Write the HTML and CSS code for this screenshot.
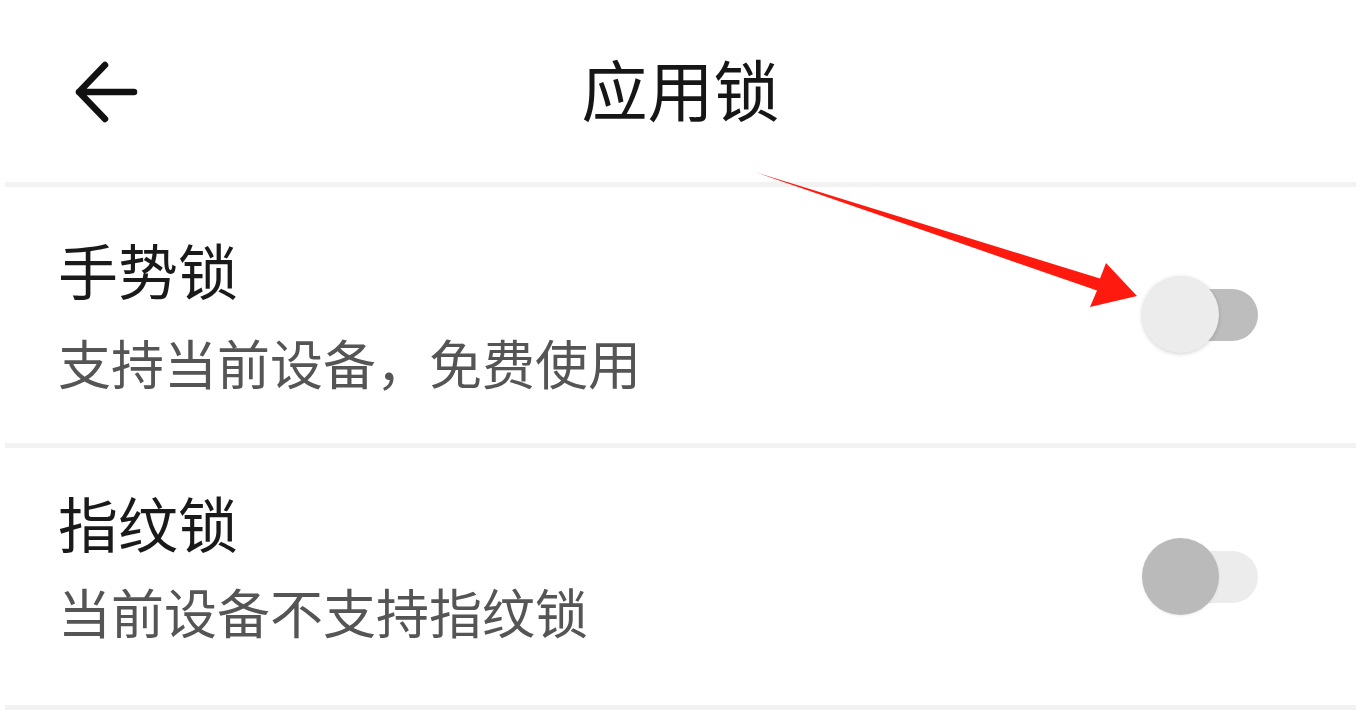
FILE: index.html
```html
<!DOCTYPE html>
<html lang="zh-CN">
<head>
    <meta charset="UTF-8">
    <title>应用锁</title>
    <link rel="stylesheet" href="styles.css">
</head>
<body>
    <div id="page">
        <div class="top-bar">
            <a class="back" href="javascript:;">
                <svg width="64" height="62" viewBox="0 0 64 62">
                    <path d="M31 4 L5 31 L31 58 M5 31 H60" fill="none" stroke="#111" stroke-width="6.5" stroke-linecap="round" stroke-linejoin="round"/>
                </svg>
            </a>
            <h1 class="title">应用锁</h1>
        </div>
        <div class="line"></div>
        <div class="item">
            <div class="item-text">
                <p class="item-name">手势锁</p>
                <p class="item-desc">支持当前设备，免费使用</p>
            </div>
            <div class="switch switch-a">
                <span class="track"></span>
                <span class="knob"></span>
            </div>
        </div>
        <div class="line"></div>
        <div class="item item-b">
            <div class="item-text">
                <p class="item-name">指纹锁</p>
                <p class="item-desc">当前设备不支持指纹锁</p>
            </div>
            <div class="switch switch-b">
                <span class="track"></span>
                <span class="knob"></span>
            </div>
        </div>
        <div class="line"></div>

        <!-- 红色标注箭头 -->
        <svg class="mark" width="1361" height="720" viewBox="0 0 1361 720">
            <polygon points="755,172 1100,278.5 1106,263 1137,296 1090,307 1097,290.5" fill="#ff1a0f"/>
        </svg>
    </div>
</body>
</html>
```

FILE: styles.css
```css
html,
body {
    margin: 0;
    padding: 0;
    background: #fff;
}
#page {
    position: relative;
    width: 1361px;
    height: 720px;
    overflow: hidden;
    font-family: "Noto Sans CJK SC", "Noto Sans", sans-serif;
    color: #1c1c1c;
}
.top-bar {
    position: relative;
    height: 182px;
    display: flex;
    align-items: center;
    justify-content: center;
}
.back {
    position: absolute;
    left: 74px;
    top: 61px;
    display: block;
    width: 64px;
    height: 62px;
}
.back svg {
    display: block;
}
.title {
    margin: 0 0 8px 0;
    font-size: 66px;
    font-weight: normal;
    line-height: 1;
    color: #161616;
}
.line {
    height: 5px;
    margin: 0 5px;
    background: #f2f2f2;
}
.item {
    height: 256px;
    display: flex;
    align-items: center;
    justify-content: space-between;
    padding: 0 103px 0 58px;
}
.item-b {
    height: 257px;
}
.item-b .item-text {
    margin-bottom: 20px;
}
.item-text {
    display: flex;
    flex-direction: column;
}
.item-name {
    margin: 0;
    font-size: 60px;
    line-height: 70px;
    color: #1a1a1a;
}
.item-desc {
    margin: 23px 0 0;
    font-size: 53px;
    line-height: 70px;
    color: #555;
}
.item-b .item-desc {
    margin-top: 19px;
}
.switch {
    position: relative;
    width: 116px;
    height: 80px;
}
.track {
    position: absolute;
    right: 0;
    top: 14px;
    width: 96px;
    height: 52px;
    border-radius: 26px;
}
.knob {
    position: absolute;
    left: 0;
    top: 1px;
    width: 77px;
    height: 77px;
    border-radius: 50%;
}
.switch-a .track {
    background: #bdbdbd;
}
.switch-a .knob {
    background: #ececec;
    box-shadow: 0 1px 4px rgba(0, 0, 0, 0.18);
}
.switch-b .track {
    background: #ececec;
}
.switch-b .knob {
    background: #bababa;
    box-shadow: 0 1px 3px rgba(0, 0, 0, 0.08);
}
.mark {
    position: absolute;
    left: 0;
    top: 0;
    pointer-events: none;
}
```
